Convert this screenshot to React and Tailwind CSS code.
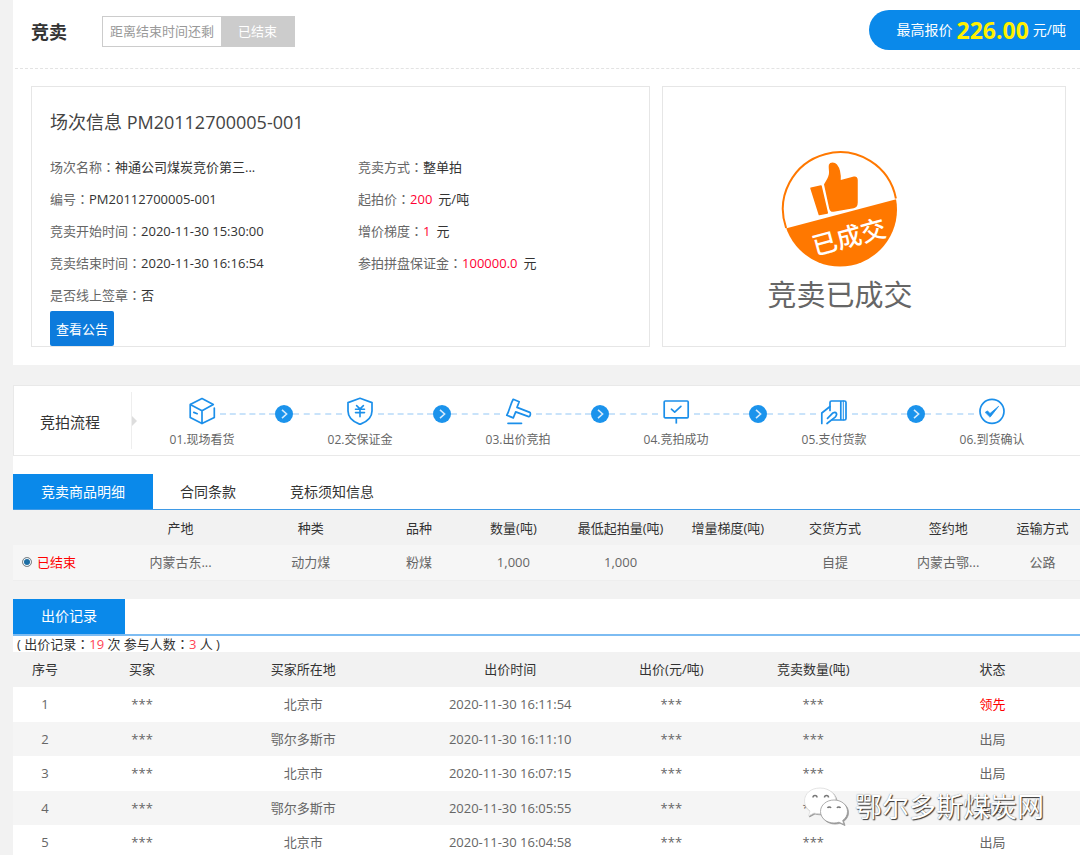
import clsx from "clsx";

const info = [
  [
    { label: "场次名称", value: "神通公司煤炭竞价第三..." },
    { label: "编号", value: "PM20112700005-001" },
    { label: "竞卖开始时间", value: "2020-11-30 15:30:00" },
    { label: "竞卖结束时间", value: "2020-11-30 16:16:54" },
    { label: "是否线上签章", value: "否" },
  ],
  [
    { label: "竞卖方式", value: "整单拍" },
    { label: "起拍价", value: "200", unit: "元/吨" },
    { label: "增价梯度", value: "1", unit: "元" },
    { label: "参拍拼盘保证金", value: "100000.0", unit: "元" },
  ],
];

const goodsColumns = [
  { title: "", width: "w-[9.6%]" },
  { title: "产地", width: "w-[12.2%]" },
  { title: "种类", width: "w-[12.2%]" },
  { title: "品种", width: "w-[8.1%]" },
  { title: "数量(吨)", width: "w-[9.6%]" },
  { title: "最低起拍量(吨)", width: "w-[10.5%]" },
  { title: "增量梯度(吨)", width: "w-[9.6%]" },
  { title: "交货方式", width: "w-[10.5%]" },
  { title: "签约地", width: "w-[10.7%]" },
  { title: "运输方式", width: "" },
];

const goods = ["内蒙古东...", "动力煤", "粉煤", "1,000", "1,000", "", "自提", "内蒙古鄂...", "公路"];

const bidColumns = [
  { title: "序号", width: "w-[6%]" },
  { title: "买家", width: "w-[12.2%]" },
  { title: "买家所在地", width: "w-[18%]" },
  { title: "出价时间", width: "w-[20.8%]" },
  { title: "出价(元/吨)", width: "w-[9.4%]" },
  { title: "竞卖数量(吨)", width: "w-[17.2%]" },
  { title: "状态", width: "" },
];

const bids = [
  { city: "北京市", time: "2020-11-30 16:11:54", status: "领先" },
  { city: "鄂尔多斯市", time: "2020-11-30 16:11:10", status: "出局" },
  { city: "北京市", time: "2020-11-30 16:07:15", status: "出局" },
  { city: "鄂尔多斯市", time: "2020-11-30 16:05:55", status: "出局" },
  { city: "北京市", time: "2020-11-30 16:04:58", status: "出局" },
];

function StepIcon({ children }) {
  return (
    <svg
      viewBox="0 0 28 28"
      className="h-7 w-7"
      fill="none"
      stroke="#1b8fea"
      strokeWidth="1.7"
      strokeLinejoin="round"
      strokeLinecap="round"
      aria-hidden="true"
    >
      {children}
    </svg>
  );
}

const steps = [
  {
    label: "01.现场看货",
    icon: (
      <StepIcon>
        <path d="M26.3 11v9.5L14 26.6 2.2 20.5v-13L14 1.5l11.3 6L14 13.8 2.2 7.5M14 13.8v12.8M5.8 15.4l3.4 1.3" />
      </StepIcon>
    ),
  },
  {
    label: "02.交保证金",
    icon: (
      <StepIcon>
        <path d="M14 1.3 26 5.6V14c0 6.500-5.500 11-12 13.400C7.500 25 2 20.500 2 14V5.600Z" />
        <path d="m10.600 8.600 3.400 3.200 3.400-3.200M9.500 12.200h9M9.500 15.600h9M14 11.800v8" strokeWidth="1.6" />
      </StepIcon>
    ),
  },
  {
    label: "03.出价竞拍",
    icon: (
      <StepIcon>
        <path d="m9.200 2.300 6 2.500-2.200 5.600 12.800 5c1.200.5.4 4.700-1.100 4.200l-13-4.700-2.400 6-6.500-2.600c2.600-4.400 3.600-11.200 6.400-16Z" />
        <path d="M4 26.300h13.500" />
      </StepIcon>
    ),
  },
  {
    label: "04.竞拍成功",
    icon: (
      <StepIcon>
        <rect x="2.200" y="4" width="24" height="16.800" rx="1" />
        <path d="m9.400 12.200 3.300 2.900 6.200-5.700" />
        <path d="M14.300 21v5.600" strokeLinecap="butt" />
      </StepIcon>
    ),
  },
  {
    label: "05.支付货款",
    icon: (
      <StepIcon>
        <path d="M10 13.500V5.500a1.500 1.500 0 0 1 1.500-1.500h13a1.500 1.500 0 0 1 1.500 1.500v16a1.500 1.500 0 0 1-1.500 1.500H12.500M20.800 4v19" />
        <path d="M23.300 4v19" strokeWidth="1" />
        <path d="M1.800 26.500V16L10 9.500M7 26.500l8.200-6.300c2.800-3 1-6-2.300-4.300l-5.400 5.400" />
      </StepIcon>
    ),
  },
  {
    label: "06.到货确认",
    icon: (
      <StepIcon>
        <circle cx="14" cy="14.300" r="12" />
        <path d="m7.500 15.200 2-1.300 2.500 2.600 8.600-7.200-8.300 10.600Z" fill="#1b8fea" strokeWidth="0.8" />
      </StepIcon>
    ),
  },
];

function Connector() {
  return (
    <div className="mt-2 flex h-[18px] flex-1 items-center">
      <span className="flex-8 border-t-2 border-dashed border-[#c9e3fa]" />
      <svg viewBox="0 0 18 18" className="size-[18px]" fill="none" aria-hidden="true">
        <circle cx="9" cy="9" r="9" fill="#1b93ec" />
        <path d="m7 4.800 4.600 4.200L7 13.200" stroke="#d4eafc" strokeWidth="1.600" />
      </svg>
      <span className="flex-7 border-t-2 border-dashed border-[#c9e3fa]" />
    </div>
  );
}

function DealStamp() {
  return (
    <svg viewBox="0 0 120 120" className="size-[120px]" aria-hidden="true">
      <clipPath id="stamp-base">
        <path d="M0 79.900 120 48.300V120H0Z" />
      </clipPath>
      <path d="M6.100 78A57 57 0 1 1 115.900 48.500" fill="none" stroke="#ff7800" strokeWidth="2" />
      <circle cx="60" cy="59.500" r="57" fill="#ff7800" clipPath="url(#stamp-base)" />
      <g fill="#ff7800" stroke="#ff7800" strokeWidth="1.500" strokeLinejoin="round">
        <path d="m31 38.300 10-2.300 6.300 27-8 1.500Z" />
        <path d="M44.800 34.500c3-5 5-7.500 5-12 0-3-.7-5-.2-7.500.8-2.500 4.800-2.500 6.800 0 3.200 4 4 10 3.600 16l14-3.700c2-.5 3 .7 3 2.700v22.500c0 3-1 4.500-3.500 5l-20 3.500c-2 .3-3-.5-3.500-2.500Z" />
      </g>
      <text
        x="69"
        y="96"
        textAnchor="middle"
        transform="rotate(-15 69 87)"
        fill="#fff"
        fontSize="25"
        fontWeight="500"
      >
        已成交
      </text>
    </svg>
  );
}

function Colon() {
  return <span className="font-['Noto_Sans_CJK_TC',sans-serif]">：</span>;
}

function InfoItem({ label, value, unit }) {
  return (
    <li className="whitespace-nowrap text-[#333]">
      <span className="text-[#666]">
        {label}
        <Colon />
      </span>
      <span className={clsx(unit && "text-[#ff0033]")}>{value}</span>
      {unit && <span className="ml-1.5">{unit}</span>}
    </li>
  );
}

function Tab({ active, children }) {
  return (
    <button
      type="button"
      role="tab"
      aria-selected={Boolean(active)}
      className={clsx("h-[35px] text-sm", active ? "bg-[#0a89ea] px-7 text-white" : "px-[27px] text-[#333]")}
    >
      {children}
    </button>
  );
}

function HeadRow({ columns }) {
  return (
    <thead>
      <tr className="h-[35px] bg-[#f2f2f2] text-[#333]">
        {columns.map((col, i) => (
          <th key={i} scope="col" className={clsx("font-normal whitespace-nowrap", col.width)}>
            {col.title}
          </th>
        ))}
      </tr>
    </thead>
  );
}

function Watermark() {
  return (
    <div className="pointer-events-none absolute right-9 bottom-7 flex items-start gap-1.5">
      <svg viewBox="0 0 46 38" className="h-[38px] w-[46px] drop-shadow-[1px_1px_0_#999]" aria-hidden="true">
        <path
          d="M17 1C8 1 1.500 6.500 1.500 14c0 4 2 7.500 5.500 10l-1.500 5 5.500-3c2 .6 4 .8 6 .8 9 0 16-5.500 16-12.800S26 1 17 1Z"
          fill="#fff"
          stroke="#ddd"
          strokeWidth="0.800"
        />
        <path
          d="M31 13c-7.500 0-13.500 5-13.500 11.500S23.500 36 31 36c1.800 0 3.500-.3 5-.8l5 2.400-1.300-4.200c3-2.100 4.800-5.200 4.800-8.900C44.500 18 38.500 13 31 13Z"
          fill="#fff"
          stroke="#999"
          strokeWidth="0.800"
        />
        <g fill="none" stroke="#777" strokeWidth="1.500">
          <path d="M10 10.500a2 2 0 0 1 4 0M21.500 10.500a2 2 0 0 1 4 0M24.500 21a2 2 0 0 1 3.500 0M34 21a2 2 0 0 1 3.500 0" />
        </g>
      </svg>
      <span className="text-[27px] leading-10 text-white [text-shadow:1px_1px_1px_#333,0_0_1px_#777]">
        鄂尔多斯煤炭网
      </span>
    </div>
  );
}

export default function App() {
  return (
    <div className="relative h-screen overflow-hidden bg-[#f2f2f2] pl-[13px] font-['Open_Sans','Noto_Sans_CJK_SC',sans-serif] text-[13px] leading-4 text-[#666]">
      <section className="bg-white pb-[18px]">
        <header className="ml-0.5 flex h-[69px] items-start border-b border-dashed border-[#e3e3e3] pl-4">
          <h1 className="mt-4 text-lg leading-8 font-bold text-[#333]">竞卖</h1>
          <div className="mt-4 ml-[35px] flex h-[31px] border border-[#ccc] leading-[29px]">
            <span className="px-[7px] text-[#999]">距离结束时间还剩</span>
            <span className="bg-[#ccc] px-[17px] text-white">已结束</span>
          </div>
          <div className="mt-2.5 ml-auto flex h-10 items-center gap-1 rounded-l-full bg-[#0a89ea] pr-3.5 pl-7 text-sm text-white">
            最高报价
            <strong className="text-[23px] text-[#fff000]">226.00</strong>
            元/吨
          </div>
        </header>

        <div className="mt-[17px] mr-3.5 ml-[18px] grid grid-cols-[23fr_15fr] gap-3">
          <div className="border border-[#e6e6e6] px-[18px]">
            <h2 className="mt-[19px] text-lg leading-8 text-[#444]">场次信息 PM20112700005-001</h2>
            <div className="mt-[13px] flex leading-8">
              <ul className="w-[53%]">
                {info[0].map((item) => (
                  <InfoItem key={item.label} {...item} />
                ))}
              </ul>
              <ul>
                {info[1].map((item) => (
                  <InfoItem key={item.label} {...item} />
                ))}
              </ul>
            </div>
            <button type="button" className="block h-[35px] w-16 rounded-xs bg-[#0d7bdc] text-white">
              查看公告
            </button>
          </div>
          <div className="flex flex-col items-center justify-center border border-[#e6e6e6] pt-[31px] pr-12">
            <DealStamp />
            <p className="mt-[5px] text-[29px] leading-10">竞卖已成交</p>
          </div>
        </div>
      </section>

      <section className="mt-5 flex h-[71px] border border-r-0 border-[#e9e9e9] bg-white">
        <h2 className="flex w-[117px] items-center pt-[3px] pl-[26px] text-[15px] text-[#333]">竞拍流程</h2>
        <div className="my-1.5 flex w-1.5 items-center border-l border-[#eee]">
          <svg viewBox="0 0 5 10" className="h-2.5 w-[5px]" aria-hidden="true">
            <path d="M0 0l5 5-5 5Z" fill="#ddd" />
          </svg>
        </div>
        <ol className="flex flex-1 pt-[11px] pr-[70px] pl-[47px]">
          {steps.map((step, i) => (
            <li key={step.label} className={clsx("flex", i > 0 && "flex-1")}>
              {i > 0 && <Connector />}
              <div className="flex w-9 flex-col items-center gap-[7px]">
                {step.icon}
                <span className="text-xs whitespace-nowrap">{step.label}</span>
              </div>
            </li>
          ))}
        </ol>
      </section>

      <section className="bg-white pt-[18px]">
        <div role="tablist" className="flex border-b border-[#3f9ae6]">
          <Tab active>竞卖商品明细</Tab>
          <Tab>合同条款</Tab>
          <Tab>竞标须知信息</Tab>
        </div>
        <table className="w-full table-fixed border-b border-[#eee] text-center">
          <HeadRow columns={goodsColumns} />
          <tbody>
            <tr className="h-[35px] bg-[#f6f6f6]">
              <td>
                <label className="flex items-center gap-[5px] pl-[9px] text-[#ff0000]">
                  <input
                    type="radio"
                    name="goods"
                    defaultChecked
                    className="size-2.5 appearance-none rounded-full border border-[#888] bg-[#1c6ea4] ring-1 ring-white ring-inset"
                  />
                  已结束
                </label>
              </td>
              {goods.map((cell, i) => (
                <td key={i}>{cell}</td>
              ))}
            </tr>
          </tbody>
        </table>
      </section>

      <section className="mt-[18px] bg-white">
        <div role="tablist" className="flex border-b-2 border-[#7dbcf2]">
          <Tab active>出价记录</Tab>
        </div>
        <p className="pl-1 text-[#333]">
          ( 出价记录
          <Colon />
          <span className="text-[#ff4455]">19</span> 次 参与人数
          <Colon />
          <span className="text-[#ff4455]">3</span> 人 )
        </p>
        <table className="w-full table-fixed text-center">
          <HeadRow columns={bidColumns} />
          <tbody>
            {bids.map((bid, i) => (
              <tr key={bid.time} className="odd:h-[35px] even:h-[34px] even:bg-[#f5f5f5]">
                <td>{i + 1}</td>
                <td>***</td>
                <td>{bid.city}</td>
                <td>{bid.time}</td>
                <td>***</td>
                <td>***</td>
                <td className={clsx(bid.status === "领先" && "text-[#ff0000]")}>{bid.status}</td>
              </tr>
            ))}
          </tbody>
        </table>
      </section>

      <Watermark />
    </div>
  );
}
